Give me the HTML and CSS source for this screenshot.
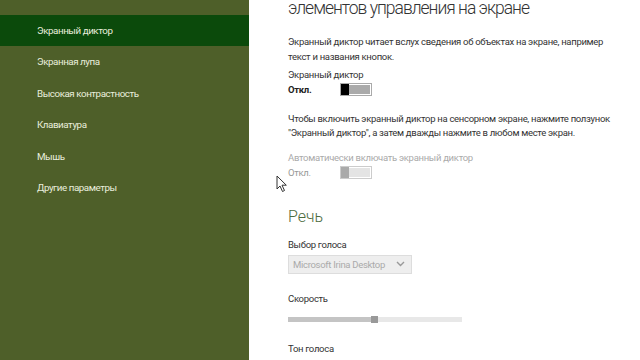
FILE: index.html
```html
<!DOCTYPE html>
<html lang="ru">

<head>
  <meta charset="UTF-8">
  <title>Специальные возможности</title>
  <link rel="stylesheet" href="styles.css">
</head>

<body>
<div class="page">
  <ul class="menu">
    <li class="cur">Экранный диктор</li>
    <li>Экранная лупа</li>
    <li>Высокая контрастность</li>
    <li>Клавиатура</li>
    <li>Мышь</li>
    <li>Другие параметры</li>
  </ul>
  <div class="main">
    <h1 class="title">элементов управления на экране</h1>
    <p class="text">Экранный диктор читает вслух сведения об объектах на экране, например<br>текст и названия кнопок.</p>

    <div class="field">
      <div class="label">Экранный диктор</div>
      <div class="toggle">
        <span class="state">Откл.</span>
        <span class="switch"><i></i></span>
      </div>
    </div>

    <p class="text hint">Чтобы включить экранный диктор на сенсорном экране, нажмите ползунок<br>"Экранный диктор", а затем дважды нажмите в любом месте экран.</p>

    <div class="field off">
      <div class="label">Автоматически включать экранный диктор</div>
      <div class="toggle">
        <span class="state">Откл.</span>
        <span class="switch"><i></i></span>
      </div>
    </div>

    <h2 class="sub">Речь</h2>

    <div class="field voice">
      <div class="label">Выбор голоса</div>
      <div class="select">
        <span>Microsoft Irina Desktop</span>
        <svg width="9" height="6" viewBox="0 0 9 6"><path d="M1 1l3.5 3.5 3.5-3.5" fill="none" stroke="#999" stroke-width="1.4"/></svg>
      </div>
    </div>

    <div class="field speed">
      <div class="label">Скорость</div>
      <div class="slider">
        <span class="fill" style="width: 48%"></span>
        <span class="thumb"></span>
      </div>
    </div>

    <div class="field pitch">
      <div class="label">Тон голоса</div>
    </div>
  </div>
</div>
<svg class="cursor" width="12" height="18" viewBox="0 0 12 18">
  <path d="M1 1v13l3-3 2.5 5.5 2-1-2.5-5.3h4.3z" fill="#fff" stroke="#333" stroke-width="1"/>
</svg>
</body>

</html>
```

FILE: styles.css
```css
* {
  padding: 0;
  margin: 0;
  font-family: Roboto, "Open Sans", sans-serif;
}

html,
body {
  height: 100%;
  overflow: hidden;
  background: #fff;
}

ul {
  list-style: none;
}

.page {
  display: flex;
  height: 360px;
}

.menu {
  width: 249px;
  flex: none;
  padding-top: 15px;
  background-color: #4e5f29;
}

.menu li {
  height: 31.4px;
  line-height: 31px;
  padding-left: 37px;
  font-size: 9.8px;
  letter-spacing: -0.45px;
  color: #e9eedd;
}

.menu li.cur {
  background-color: #0b4a0b;
}

.main {
  flex: 1;
  padding-left: 39px;
  color: #333;
  white-space: nowrap;
  letter-spacing: -0.3px;
}

.title {
  font-size: 17.5px;
  font-weight: 300;
  letter-spacing: -1px;
  line-height: 16px;
  color: #333;
}

.text {
  margin-top: 18px;
  font-size: 9.5px;
  line-height: 15px;
  color: #333;
}

.text.hint {
  margin-top: 15px;
  line-height: 14px;
}

.field {
  margin-top: 3px;
}

.label {
  font-size: 9.5px;
  line-height: 15px;
  color: #333;
}

.toggle {
  display: flex;
  align-items: center;
  height: 15px;
}

.state {
  width: 52px;
  font-size: 9.5px;
  font-weight: 700;
  color: #222;
}

.switch {
  display: flex;
  width: 30px;
  height: 11px;
  border: 1px solid #aaa;
  background: #aaa;
  box-shadow: inset 0 0 0 1px #fff;
}

.switch i {
  width: 8px;
  background: #000;
}

.field.off {
  margin-top: 10px;
}

.off .label {
  color: #aaa;
}

.off .state {
  font-weight: 400;
  color: #999;
}

.off .switch {
  border-color: #ccc;
  background: #e4e4e4;
}

.off .switch i {
  background: #aaa;
}

.sub {
  margin-top: 24.5px;
  font-size: 16px;
  font-weight: 300;
  letter-spacing: 0;
  line-height: 24px;
  color: #4b6a3c;
}

.field.voice {
  margin-top: 8.5px;
}

.select {
  display: flex;
  align-items: center;
  justify-content: space-between;
  width: 112px;
  height: 17px;
  margin-top: 2.5px;
  padding: 0 6px 0 4px;
  border: 1px solid #ddd;
  background: #eee;
  font-size: 9.5px;
  color: #aaa;
}

.field.speed {
  margin-top: 17.5px;
}

.slider {
  position: relative;
  display: flex;
  width: 174px;
  height: 5px;
  margin-top: 10.5px;
  background: #e8e8e8;
}

.slider .fill {
  background: #c4c4c4;
}

.slider .thumb {
  position: absolute;
  left: 83px;
  top: -1px;
  width: 7px;
  height: 7px;
  background: #999;
}

.field.pitch {
  margin-top: 19.5px;
}

.cursor {
  position: absolute;
  left: 276px;
  top: 175px;
}
```
